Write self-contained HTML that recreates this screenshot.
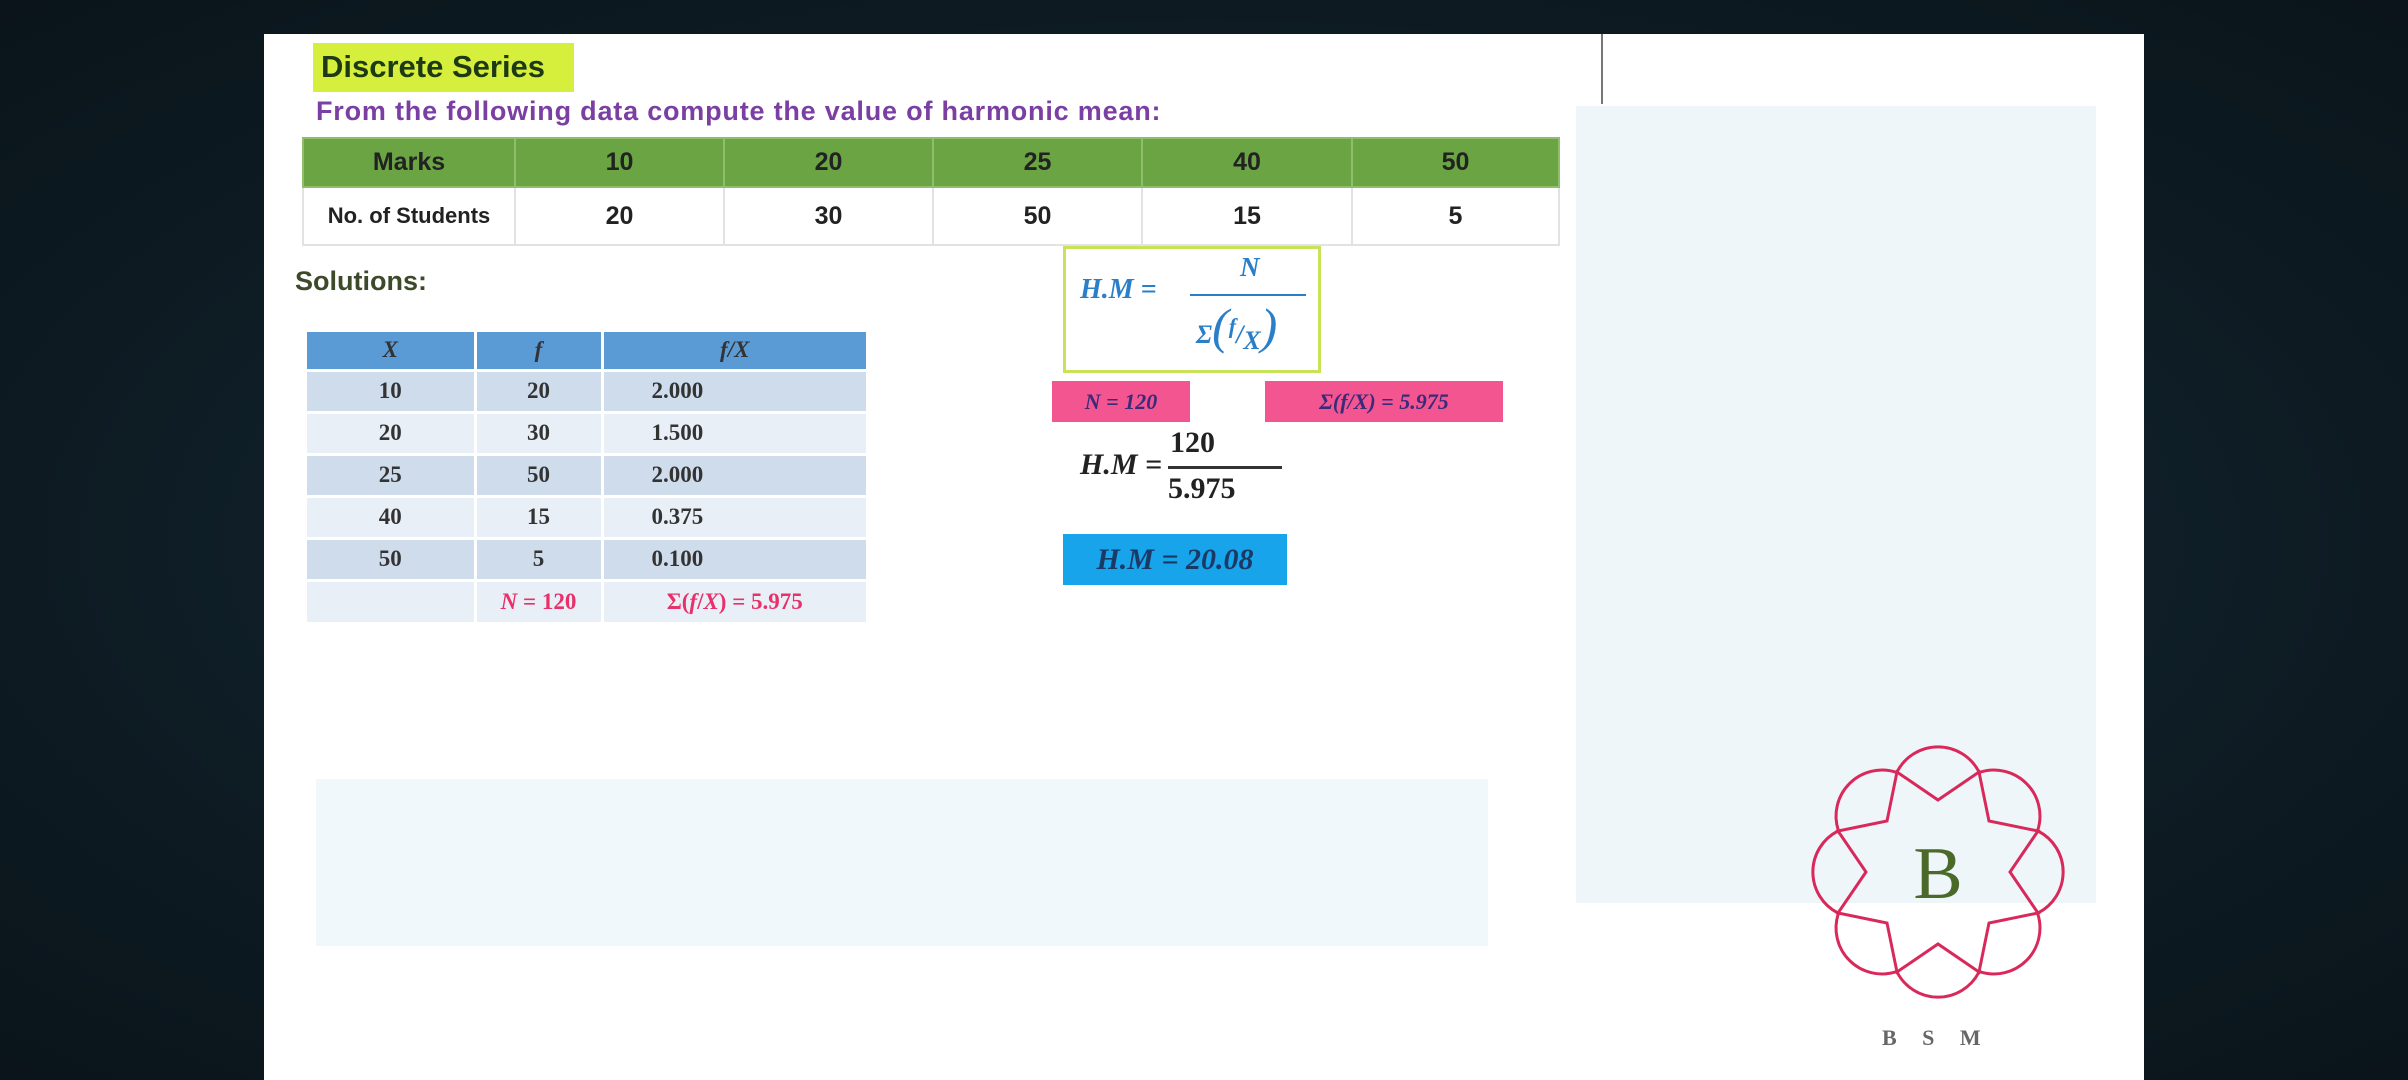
<!DOCTYPE html>
<html><head><meta charset="utf-8"><style>
*{margin:0;padding:0;box-sizing:border-box}
body{width:2408px;height:1080px;overflow:hidden;background:radial-gradient(ellipse at center,#16303c 0%,#0d1a22 70%,#0a141a 100%);font-family:"Liberation Sans Narrow","Liberation Sans",sans-serif;position:relative}
.a{position:absolute}
.slide{left:264px;top:34px;width:1880px;height:1046px;background:#fff}
table{border-collapse:collapse;position:absolute}
.t1 td{border:2px solid #e2e2e2;text-align:center;font-weight:bold;font-size:25px;color:#222}
.t1 tr.h td{background:#6aa443;border-color:#8fbf6d}
.t2 td{text-align:center;font-family:"Liberation Serif",serif;font-weight:bold;font-size:23px;color:#333;border-right:3px solid #fff;border-bottom:3px solid #fff}
.m{font-family:"Liberation Serif",serif;font-weight:bold;font-style:italic}
</style></head><body>
<div class="a slide"></div>
<div class="a" style="left:1601px;top:34px;width:2px;height:70px;background:#777"></div>
<div class="a" style="left:1576px;top:106px;width:520px;height:797px;background:#eef6f9"></div>
<div class="a" style="left:316px;top:779px;width:1172px;height:167px;background:#f1f8fb"></div>
<div class="a" style="left:313px;top:43px;width:261px;height:49px;background:#d5ef3c;font-weight:bold;font-size:31px;color:#1e3a14;padding:6px 8px">Discrete Series</div>
<div class="a" style="left:316px;top:96px;font-weight:bold;font-size:27px;color:#7b3fa3;letter-spacing:0.8px">From the following data compute the value of harmonic mean:</div>
<table class="t1" style="left:302px;top:137px;width:1258px">
<tr class="h" style="height:49px"><td style="width:212px">Marks</td><td style="width:209px">10</td><td style="width:209px">20</td><td style="width:209px">25</td><td style="width:210px">40</td><td>50</td></tr>
<tr style="height:58px"><td style="font-size:22px">No. of Students</td><td>20</td><td>30</td><td>50</td><td>15</td><td>5</td></tr>
</table>
<div class="a" style="left:295px;top:266px;font-weight:bold;font-size:27px;color:#3d4a2a">Solutions:</div>
<table class="t2" style="left:307px;top:332px;width:562px">
<tr style="height:38px;background:#5b9bd5"><td class="m" style="width:168px">X</td><td class="m" style="width:127px">f</td><td class="m">f/X</td></tr>
<tr style="height:42px;background:#cfdcec"><td>10</td><td>20</td><td style="text-align:left;padding-left:48px">2.000</td></tr>
<tr style="height:42px;background:#e9eff7"><td>20</td><td>30</td><td style="text-align:left;padding-left:48px">1.500</td></tr>
<tr style="height:42px;background:#cfdcec"><td>25</td><td>50</td><td style="text-align:left;padding-left:48px">2.000</td></tr>
<tr style="height:42px;background:#e9eff7"><td>40</td><td>15</td><td style="text-align:left;padding-left:48px">0.375</td></tr>
<tr style="height:42px;background:#cfdcec"><td>50</td><td>5</td><td style="text-align:left;padding-left:48px">0.100</td></tr>
<tr style="height:43px;background:#e9eff7"><td></td><td style="color:#e8306a"><i>N</i> = 120</td><td style="color:#e8306a">Σ(<i>f</i>/<i>X</i>) = 5.975</td></tr>
</table>
<div class="a" style="left:1063px;top:246px;width:258px;height:127px;border:3px solid #c8e25a"></div>
<div class="a m" style="left:1080px;top:274px;font-size:28px;color:#2a7fc8">H.M =</div>
<div class="a m" style="left:1240px;top:252px;font-size:27px;color:#2a7fc8">N</div>
<div class="a" style="left:1190px;top:294px;width:116px;height:2px;background:#2a7fc8"></div>
<div class="a m" style="left:1196px;top:296px;font-size:26px;color:#2a7fc8;white-space:nowrap;line-height:60px">Σ<span style="font-size:50px;font-weight:normal">(</span><sup style="font-size:22px">f</sup>/<sub style="font-size:26px">X</sub><span style="font-size:50px;font-weight:normal">)</span></div>
<div class="a m" style="left:1052px;top:381px;width:138px;height:41px;background:#f25590;color:#3a2a7a;font-size:22px;text-align:center;line-height:41px">N = 120</div>
<div class="a m" style="left:1265px;top:381px;width:238px;height:41px;background:#f25590;color:#3a2a7a;font-size:22px;text-align:center;line-height:41px">Σ(f/X) = 5.975</div>
<div class="a m" style="left:1080px;top:448px;font-size:30px;color:#222">H.M =</div>
<div class="a" style="left:1170px;top:426px;font-family:'Liberation Serif',serif;font-weight:bold;font-size:30px;color:#222">120</div>
<div class="a" style="left:1168px;top:466px;width:114px;height:3px;background:#333"></div>
<div class="a" style="left:1168px;top:472px;font-family:'Liberation Serif',serif;font-weight:bold;font-size:30px;color:#222">5.975</div>
<div class="a m" style="left:1063px;top:534px;width:224px;height:51px;background:#17a4ea;color:#1a3a66;font-size:30px;text-align:center;line-height:51px">H.M = 20.08</div>
<svg class="a" style="left:1808px;top:742px" width="260" height="260" viewBox="-130 -130 260 260">
<g fill="none" stroke="#d8295a" stroke-width="3">
<path d="M0,-72 L41,-100 L51,-51 L100,-41 L72,0 L100,41 L51,51 L41,100 L0,72 L-41,100 L-51,51 L-100,41 L-72,0 L-100,-41 L-51,-51 L-41,-100 Z"/>
<g id="lb"><path d="M-41,-100 A46 46 0 0 1 41,-100"/></g>
<use href="#lb" transform="rotate(45)"/><use href="#lb" transform="rotate(90)"/><use href="#lb" transform="rotate(135)"/><use href="#lb" transform="rotate(180)"/><use href="#lb" transform="rotate(225)"/><use href="#lb" transform="rotate(270)"/><use href="#lb" transform="rotate(315)"/>
</g>
<text x="0" y="26" text-anchor="middle" font-family="Liberation Serif,serif" font-size="74" fill="#4b6a2a">B</text>
</svg>
<div class="a" style="left:1882px;top:1025px;font-family:'Liberation Serif',serif;font-weight:bold;font-size:22px;color:#666;word-spacing:20px">B S M</div>
</body></html>
